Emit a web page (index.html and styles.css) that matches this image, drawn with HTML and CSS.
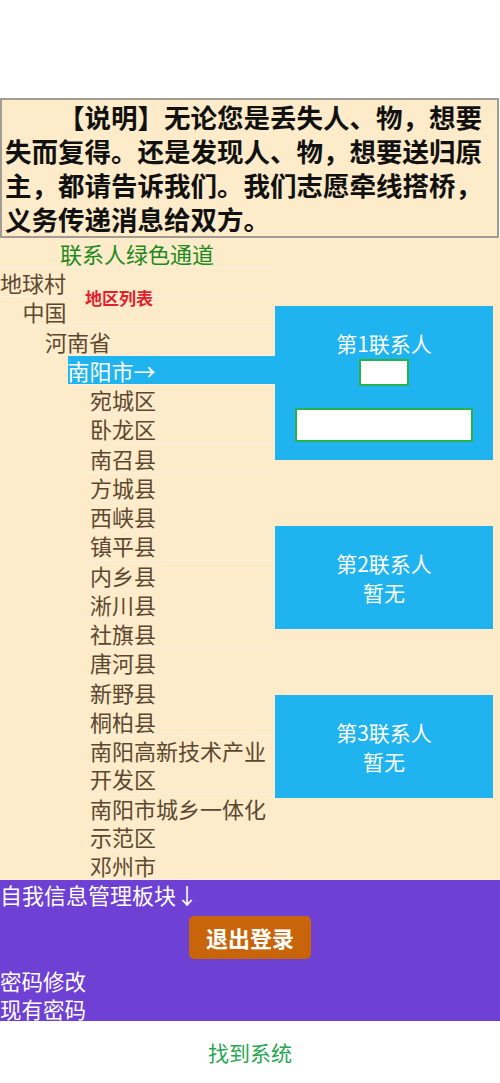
FILE: index.html
```html
<!DOCTYPE html>
<html lang="zh-CN">
<head>
<meta charset="utf-8">
<title>联系人绿色通道</title>
<link rel="stylesheet" href="styles.css">
</head>
<body>
<div class="spacer"></div>
<div class="notice">【说明】无论您是丢失人、物，想要失而复得。还是发现人、物，想要送归原主，都请告诉我们。我们志愿牵线搭桥，义务传递消息给双方。</div>
<div class="main">
  <div class="left">
    <div class="heading">联系人绿色通道</div>
    <span class="tag">地区列表</span>
    <ul class="tree root">
      <li><span class="label">地球村</span>
        <ul class="tree">
          <li><span class="label">中国</span>
            <ul class="tree">
              <li><span class="label">河南省</span>
                <ul class="tree">
                  <li><span class="label active">南阳市→</span>
                    <ul class="tree">
                      <li><span class="label">宛城区</span></li>
                      <li><span class="label">卧龙区</span></li>
                      <li><span class="label">南召县</span></li>
                      <li><span class="label">方城县</span></li>
                      <li><span class="label">西峡县</span></li>
                      <li><span class="label">镇平县</span></li>
                      <li><span class="label">内乡县</span></li>
                      <li><span class="label">淅川县</span></li>
                      <li><span class="label">社旗县</span></li>
                      <li><span class="label">唐河县</span></li>
                      <li><span class="label">新野县</span></li>
                      <li><span class="label">桐柏县</span></li>
                      <li><span class="label">南阳高新技术产业开发区</span></li>
                      <li><span class="label">南阳市城乡一体化示范区</span></li>
                      <li><span class="label">邓州市</span></li>
                    </ul>
                  </li>
                </ul>
              </li>
            </ul>
          </li>
        </ul>
      </li>
    </ul>
  </div>
  <div class="right">
    <div class="contact first">
      <div class="ctitle">第1联系人</div>
      <div class="field small"></div>
      <div class="field wide"></div>
    </div>
    <div class="contact">
      <div class="ctitle">第2联系人</div>
      <div class="ctitle">暂无</div>
    </div>
    <div class="contact">
      <div class="ctitle">第3联系人</div>
      <div class="ctitle">暂无</div>
    </div>
  </div>
</div>
<div class="self">
  <div class="self-title">自我信息管理板块↓</div>
  <div class="btn-row"><span class="logout">退出登录</span></div>
  <div class="self-line">密码修改</div>
  <div class="self-line last">现有密码</div>
</div>
<div class="footer">找到系统</div>
</body>
</html>
```

FILE: styles.css
```css
* { box-sizing: border-box; }
html, body {
  margin: 0;
  padding: 0;
  background: #ffffff;
  font-family: "Noto Sans CJK SC", "Noto Sans", sans-serif;
}
.spacer { height: 98px; }
.notice {
  margin-right: 1px;
  background: #fdebc9;
  border: 2px solid #a29d94;
  padding: 0 2px 0 3px;
  font-size: 26.5px;
  line-height: 34px;
  font-weight: bold;
  color: #111111;
  text-indent: 2em;
}
.main {
  display: flex;
  background: #fdebc9;
  position: relative;
}
.left {
  width: 274px;
  flex: none;
}
.heading {
  height: 30px;
  line-height: 30px;
  text-align: center;
  font-size: 22px;
  color: #1e8a22;
  border-bottom: 1px solid #f8efe1;
}
.tag {
  position: absolute;
  left: 85px;
  top: 50px;
  font-size: 17px;
  font-weight: bold;
  color: #e1222e;
  line-height: 20px;
}
.tree {
  list-style: none;
  margin: 0;
  padding: 0 0 0 22.5px;
}
.tree.root { padding-left: 0; }
.tree li { margin: 0; padding: 0; }
.label {
  display: block;
  font-size: 22px;
  line-height: 28.25px;
  color: #5c4832;
  border-bottom: 1px solid #f8efe1;
}
.label.active {
  background: #1fb3ef;
  color: #ffffff;
  margin-right: -1px;
}
.right {
  width: 218px;
  flex: none;
  margin-left: 1px;
}
.contact {
  background: #1fb3ef;
  margin-top: 66px;
  padding: 23px 0 22px;
  text-align: center;
  color: #ffffff;
}
.contact.first { margin-top: 68px; padding-bottom: 18px; }
.ctitle {
  font-size: 21px;
  line-height: 29px;
}
.field {
  background: #ffffff;
  border: 2px solid #25b24c;
  margin: 0 auto;
}
.field.small { width: 50px; height: 27px; margin-top: 1px; }
.field.wide { width: 178px; height: 34px; margin-top: 22px; }
.self {
  background: #6f40d4;
  color: #ffffff;
  font-size: 22px;
  line-height: 28px;
}
.self-title { height: 28px; }
.btn-row {
  display: flex;
  justify-content: center;
  padding: 8px 0;
}
.logout {
  display: block;
  width: 122px;
  height: 43px;
  line-height: 43px;
  text-align: center;
  background: #c8650a;
  border-radius: 5px;
  font-weight: bold;
  font-size: 22px;
}
.self-line {
  height: 28px;
  font-size: 21.5px;
  line-height: 26px;
  padding-top: 1px;
}
.self-line.last { height: 26px; }
.footer {
  height: 62px;
  line-height: 62px;
  text-align: center;
  font-size: 21px;
  color: #2aa653;
}
```
